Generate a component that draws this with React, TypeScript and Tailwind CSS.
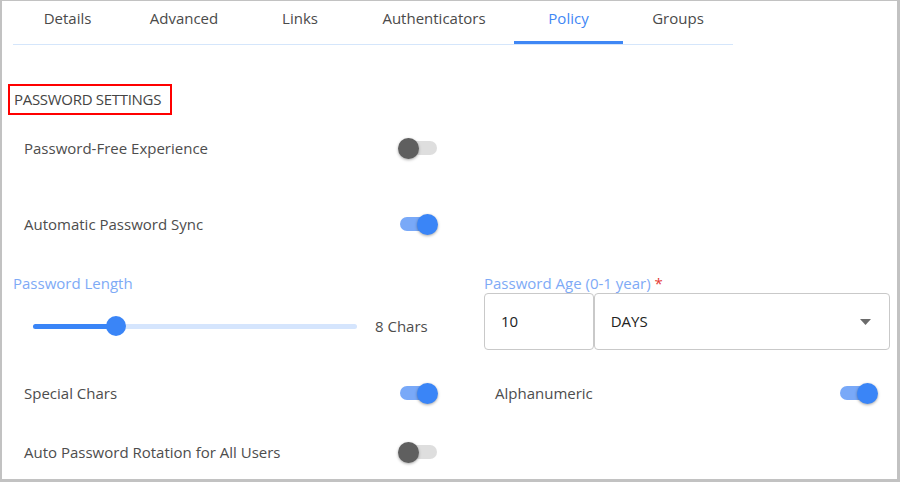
const tabs = [
  { label: "Details", w: "w-[109px]" },
  { label: "Advanced", w: "w-[124px]" },
  { label: "Links", w: "w-[108px]" },
  { label: "Authenticators", w: "w-[160px]" },
  { label: "Policy", w: "w-[109px]", active: true },
  { label: "Groups", w: "w-[110px]" },
];

function Toggle({ on }: { on: boolean }) {
  return (
    <div className="relative w-[40px] h-[22px] shrink-0">
      <div
        className={`absolute left-[2px] right-[1px] top-[4px] h-[14px] rounded-full ${
          on ? "bg-[#79a9f8]" : "bg-[#dedede]"
        }`}
      />
      <div
        className={`absolute top-[1px] w-[21px] h-[21px] rounded-full shadow-[0_1px_3px_rgba(0,0,0,0.35)] ${
          on ? "right-0 bg-[#3a85f7]" : "left-0 bg-[#5f5f5f]"
        }`}
      />
    </div>
  );
}

function ToggleRow({ label, on, w }: { label: string; on: boolean; w: string }) {
  return (
    <div className={`flex items-center justify-between h-[40px] pl-[11px] ${w}`}>
      <span className="text-[15px] text-[#4d4d4d]">{label}</span>
      <Toggle on={on} />
    </div>
  );
}

export default function App() {
  const length = 8;
  const pct = 25.6;

  return (
    <div
      className="w-[900px] h-[482px] bg-white border-l-2 border-t border-r-[3px] border-b-[3px] border-[#c2c2c2] overflow-hidden"
      style={{ fontFamily: '"Open Sans", "Noto Sans", sans-serif' }}
    >
      {/* tab bar */}
      <div className="flex ml-[11px] w-[720px] border-b border-[#d5e6fb]">
        {tabs.map((t) => (
          <div
            key={t.label}
            className={`${t.w} h-[43px] flex justify-center pt-[7px] text-[15px] font-medium leading-[20px] ${
              t.active ? "text-[#3f87f5] border-b-[3px] border-[#3f87f5]" : "text-[#4a4a4a]"
            }`}
          >
            {t.label}
          </div>
        ))}
      </div>

      <div className="pl-[6px] mt-[39px]">
        <div className="w-[164px] h-[31px] border-2 border-[#ff0000] flex items-center pl-[4px] text-[15px] text-[#444] tracking-[-0.3px]">
          PASSWORD SETTINGS
        </div>
      </div>

      <div className="pl-[11px]">
        <div className="mt-[13px]">
          <ToggleRow label="Password-Free Experience" on={false} w="w-[425px]" />
        </div>
        <div className="mt-[36px]">
          <ToggleRow label="Automatic Password Sync" on={true} w="w-[425px]" />
        </div>

        <div className="grid grid-cols-[458px_406px] gap-[13px] mt-[29px]">
          <div>
            <div className="text-[15px] leading-[20px] text-[#7eaaf6]">Password Length</div>
            <div className="flex items-center h-[56px] pt-[10px]">
              <div className="relative ml-[20px] w-[324px] h-[5px] rounded-full bg-[#d5e5fd]">
                <div className="absolute left-0 top-0 h-full rounded-full bg-[#3a85f7]" style={{ width: `${pct}%` }} />
                <div
                  className="absolute top-1/2 w-[20px] h-[20px] -ml-[10px] -mt-[10px] rounded-full bg-[#3a85f7]"
                  style={{ left: `${pct}%` }}
                />
              </div>
              <span className="ml-[18px] text-[15px] text-[#4d4d4d]">{length} Chars</span>
            </div>
          </div>

          <div>
            <div className="text-[15px] leading-[20px] text-[#7eaaf6]">
              Password Age (0-1 year) <span className="text-[#e53935]">*</span>
            </div>
            <div className="flex">
              <div className="w-[110px] h-[57px] border border-[#c9c9c9] rounded-[4px] flex items-center pl-[16px] text-[15px] text-[#222]">
                10
              </div>
              <div className="w-[297px] h-[57px] border border-[#c9c9c9] rounded-[4px] flex items-center justify-between pl-[16px] pr-[18px] text-[15px] text-[#222]">
                <span>DAYS</span>
                <svg width="11" height="6" viewBox="0 0 11 6">
                  <path d="M0 0h11L5.5 6z" fill="#6b6b6b" />
                </svg>
              </div>
            </div>
          </div>
        </div>

        <div className="grid grid-cols-[458px_406px] gap-[13px] mt-[23px]">
          <ToggleRow label="Special Chars" on={true} w="w-[425px]" />
          <ToggleRow label="Alphanumeric" on={true} w="w-[394px]" />
        </div>

        <div className="mt-[19px]">
          <ToggleRow label="Auto Password Rotation for All Users" on={false} w="w-[425px]" />
        </div>
      </div>
    </div>
  );
}
